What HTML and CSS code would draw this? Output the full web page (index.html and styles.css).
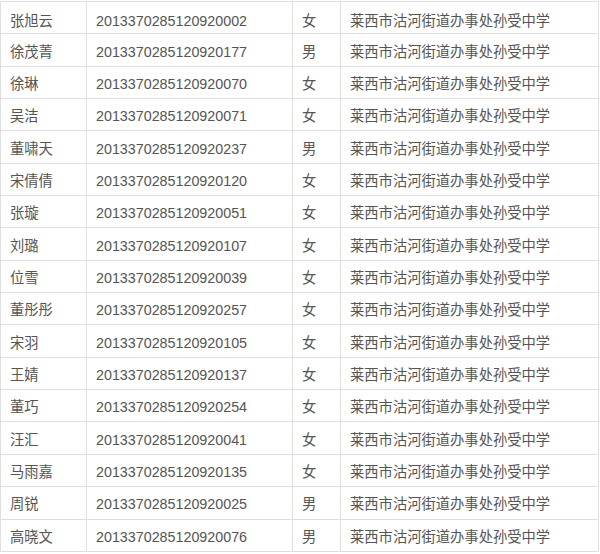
FILE: index.html
```html
<!DOCTYPE html>
<html lang="zh-CN">
<head>
    <meta charset="UTF-8">
    <title>名单</title>
    <link rel="stylesheet" href="styles.css">
</head>
<body>
    <table class="roster">
        <colgroup>
            <col class="col-name">
            <col class="col-id">
            <col class="col-sex">
            <col class="col-school">
        </colgroup>
        <tbody>
            <tr><td>张旭云</td><td>2013370285120920002</td><td>女</td><td>莱西市沽河街道办事处孙受中学</td></tr>
            <tr><td>徐茂菁</td><td>2013370285120920177</td><td>男</td><td>莱西市沽河街道办事处孙受中学</td></tr>
            <tr><td>徐琳</td><td>2013370285120920070</td><td>女</td><td>莱西市沽河街道办事处孙受中学</td></tr>
            <tr><td>吴洁</td><td>2013370285120920071</td><td>女</td><td>莱西市沽河街道办事处孙受中学</td></tr>
            <tr><td>董啸天</td><td>2013370285120920237</td><td>男</td><td>莱西市沽河街道办事处孙受中学</td></tr>
            <tr><td>宋倩倩</td><td>2013370285120920120</td><td>女</td><td>莱西市沽河街道办事处孙受中学</td></tr>
            <tr><td>张璇</td><td>2013370285120920051</td><td>女</td><td>莱西市沽河街道办事处孙受中学</td></tr>
            <tr><td>刘璐</td><td>2013370285120920107</td><td>女</td><td>莱西市沽河街道办事处孙受中学</td></tr>
            <tr><td>位雪</td><td>2013370285120920039</td><td>女</td><td>莱西市沽河街道办事处孙受中学</td></tr>
            <tr><td>董彤彤</td><td>2013370285120920257</td><td>女</td><td>莱西市沽河街道办事处孙受中学</td></tr>
            <tr><td>宋羽</td><td>2013370285120920105</td><td>女</td><td>莱西市沽河街道办事处孙受中学</td></tr>
            <tr><td>王婧</td><td>2013370285120920137</td><td>女</td><td>莱西市沽河街道办事处孙受中学</td></tr>
            <tr><td>董巧</td><td>2013370285120920254</td><td>女</td><td>莱西市沽河街道办事处孙受中学</td></tr>
            <tr><td>汪汇</td><td>2013370285120920041</td><td>女</td><td>莱西市沽河街道办事处孙受中学</td></tr>
            <tr><td>马雨嘉</td><td>2013370285120920135</td><td>女</td><td>莱西市沽河街道办事处孙受中学</td></tr>
            <tr><td>周锐</td><td>2013370285120920025</td><td>男</td><td>莱西市沽河街道办事处孙受中学</td></tr>
            <tr><td>高晓文</td><td>2013370285120920076</td><td>男</td><td>莱西市沽河街道办事处孙受中学</td></tr>
        </tbody>
    </table>
</body>
</html>
```

FILE: styles.css
```css
body {
    margin: 0;
    background: #fff;
    font-family: "Liberation Sans", "Noto Sans CJK SC", sans-serif;
    font-size: 14.3px;
    color: #555;
}
.roster {
    border-collapse: collapse;
    table-layout: fixed;
    width: 598px;
    margin-top: 1px;
}
.col-name { width: 86px; }
.col-id { width: 206px; }
.col-sex { width: 48px; }
.col-school { width: 258px; }
.roster td {
    border: 1px solid #e0e0e0;
    height: 32.35px;
    padding: 3px 9px 0;
    box-sizing: border-box;
    vertical-align: middle;
    white-space: nowrap;
    line-height: 20px;
}
.roster tr:first-child td {
    padding-top: 6px; /* first row text sits a bit lower */
}
```
